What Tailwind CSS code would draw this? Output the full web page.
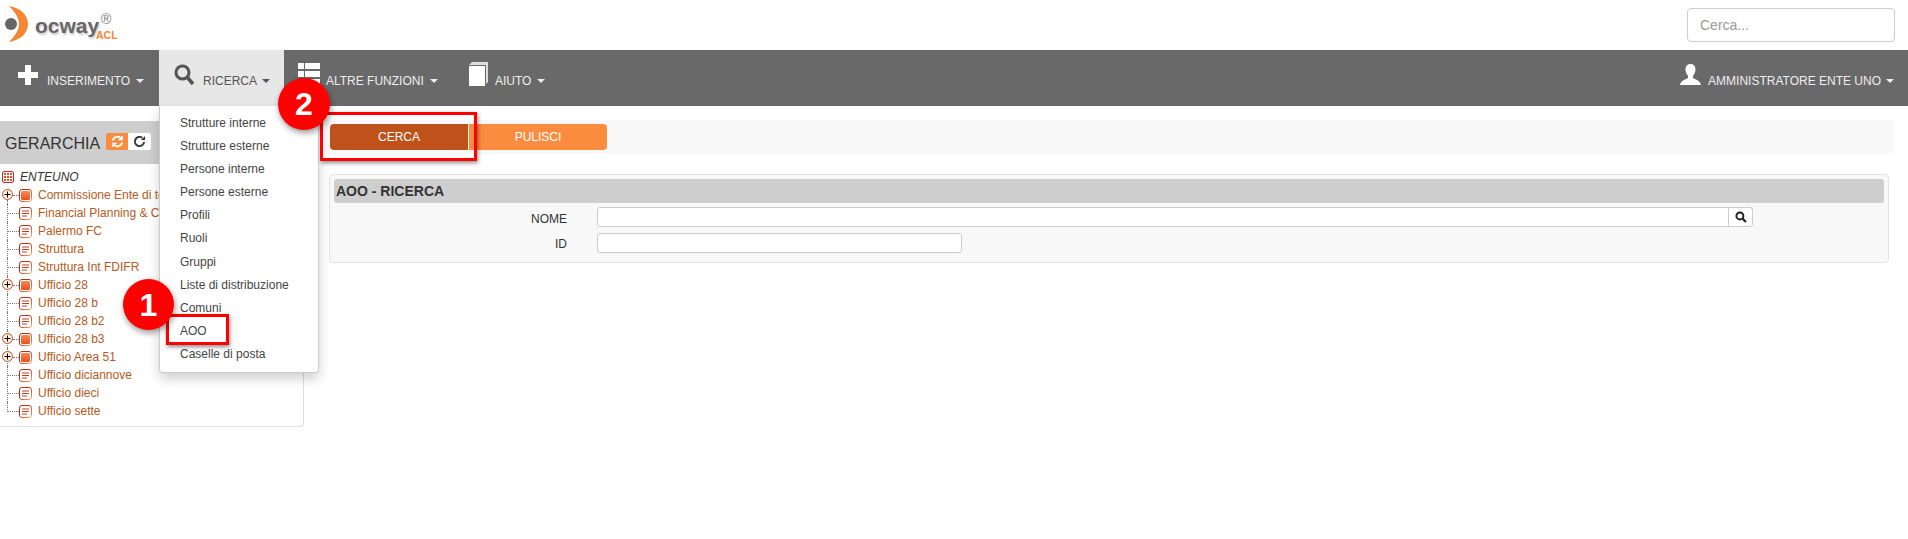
<!DOCTYPE html>
<html lang="it">
  <head>
    <meta charset="UTF-8" />
    <meta name="viewport" content="width=device-width, initial-scale=1.0" />
    <script src="https://cdn.jsdelivr.net/npm/@tailwindcss/browser@4"></script>
    <title>Docway ACL</title>
  </head>
  <body class="relative bg-white h-[539px] overflow-hidden font-['Liberation_Sans',Arial,sans-serif] text-[12px] text-[#333]">
    <svg class="absolute w-0 h-0">
      <defs>
        <linearGradient id="edge" x1="0" y1="0" x2="1" y2="1">
          <stop offset="0.4" stop-color="#b8301a" />
          <stop offset="1" stop-color="#f9b070" />
        </linearGradient>
        <linearGradient id="fillbox" x1="0" y1="0" x2="0" y2="1">
          <stop offset="0" stop-color="#f98a55" />
          <stop offset="1" stop-color="#e8501f" />
        </linearGradient>
      </defs>
      <symbol id="office" viewBox="0 0 13 13">
        <rect x="0.500" y="0.500" width="12" height="12" rx="2.500" fill="#fff" stroke="url(#edge)" />
        <rect x="2" y="2" width="9" height="9" rx="1.500" fill="url(#fillbox)" />
      </symbol>
      <symbol id="doc" viewBox="0 0 13 13">
        <rect x="0.500" y="0.500" width="12" height="12" rx="2.500" fill="#fff" stroke="url(#edge)" />
        <path d="M3 4h7M3 6.500h7M3 9h5" stroke="#c9401c" stroke-width="1" />
      </symbol>
      <symbol id="expand" viewBox="0 0 11 11">
        <circle cx="5.500" cy="5.500" r="5" fill="#fff0dc" stroke="#c9502a" />
        <path d="M2.500 5.500h6M5.500 2.500v6" stroke="#000" stroke-width="1" />
      </symbol>
      <symbol id="caret" viewBox="0 0 8 4">
        <path d="M0 0h8L4 4z" fill="currentColor" />
      </symbol>
    </svg>

    <!-- Logo and search -->
    <header class="h-[50px] flex items-center justify-between pr-[13px]">
      <div class="relative w-[130px] h-[50px]">
        <svg class="absolute left-[5px] top-[6px] w-[24px] h-[36px]" viewBox="0 0 24 36">
          <circle cx="6" cy="18" r="6" fill="#666" />
          <path d="M4 0C16 2 23 9 23 18S16 34 4 36C10 30 14 24 14 18S10 6 4 0z" fill="#f58634" />
        </svg>
        <span class="absolute left-[35px] top-[15px] font-bold text-[21px] leading-[21px] text-[#666] [text-shadow:1px_2px_2px_#ccc]">ocway</span>
        <span class="absolute left-[101px] top-[12px] text-[14px] leading-[14px] text-[#777]">®</span>
        <span class="absolute left-[96px] top-[29px] font-bold text-[10.500px] leading-[12px] text-[#f58634]">ACL</span>
      </div>
      <input type="text" placeholder="Cerca..." class="w-[208px] h-[34px] px-3 text-[14px] bg-white border border-[#ccc] rounded placeholder:text-[#999]" />
    </header>

    <!-- Main menu -->
    <nav class="h-[56px] bg-[#696969] flex items-stretch justify-between text-[#eee]">
      <div class="flex items-stretch">
        <a class="w-[159px] pl-[18px] flex items-center gap-[9px] pt-[6px]">
          <svg class="w-[20px] h-[20px] mb-[12px]" viewBox="0 0 20 20"><path d="M7 0h6v7h7v6h-7v7H7v-7H0V7h7z" fill="#fff" /></svg>
          <span>INSERIMENTO</span>
          <svg class="w-[8px] h-[4px] -ml-[3px]"><use href="#caret" /></svg>
        </a>
        <a class="w-[125px] pl-[15px] flex items-center gap-[8px] pt-[6px] bg-[#e7e7e7] text-[#555]">
          <svg class="w-[21px] h-[22px] mb-[13px]" viewBox="0 0 21 22" fill="none" stroke="#555"><circle cx="8.500" cy="8.500" r="6.500" stroke-width="3" /><path d="M13 13l6 7" stroke-width="3.500" /></svg>
          <span>RICERCA</span>
          <svg class="w-[8px] h-[4px] -ml-[3px]"><use href="#caret" /></svg>
        </a>
        <a class="w-[185px] pl-[14px] flex items-center gap-[6px] pt-[6px]">
          <svg class="w-[22px] h-[22px] mb-[14px]" viewBox="0 0 22 22" fill="#fff"><path d="M0 0h6v6H0zM7 0h15v6H7zM0 8h6v6H0zM7 8h15v6H7zM0 16h6v6H0zM7 16h15v6H7z" /></svg>
          <span>ALTRE FUNZIONI</span>
          <svg class="w-[8px] h-[4px]"><use href="#caret" /></svg>
        </a>
        <a class="flex items-center gap-[7px] pt-[6px]">
          <svg class="w-[19px] h-[24px] mb-[14px]" viewBox="0 0 19 24"><path d="M0 3L3 0h16v20l-2 2V3z" fill="#ddd" /><path d="M0 4h16v20H0z" fill="#fff" /></svg>
          <span>AIUTO</span>
          <svg class="w-[8px] h-[4px] -ml-[1px]"><use href="#caret" /></svg>
        </a>
      </div>
      <a class="pr-[14px] flex items-center gap-[7px] pt-[6px]">
        <svg class="w-[21px] h-[21px] mb-[14px]" viewBox="0 0 21 21" fill="#fff"><path d="M10.500 0c3.500 0 5 2.500 5 5.500 0 3-1.500 5-2.500 6.500v2c2 1.500 7 2 8 7H0c1-5 6-5.500 8-7v-2C7 10.500 5.500 8.500 5.500 5.500 5.500 2.500 7 0 10.500 0z" /></svg>
        <span>AMMINISTRATORE ENTE UNO</span>
        <svg class="w-[8px] h-[4px] -ml-[2px]"><use href="#caret" /></svg>
      </a>
    </nav>

    <div class="flex items-start">
      <!-- Hierarchy -->
      <aside class="w-[304px] mt-[15px] h-[306px] border-r border-b border-[#ddd] rounded-br">
        <div class="h-[43px] bg-[#cecece] flex items-center pl-[5px] text-[#333]">
          <h2 class="w-[101px] text-[16px] pt-[2px]">GERARCHIA</h2>
          <span class="w-[22px] h-[17px] mb-[2px] bg-[#fb8c3f] rounded-l-[2px] flex items-center justify-center">
            <svg class="w-[13px] h-[13px]" viewBox="0 0 14 14" fill="none" stroke="#fff" stroke-width="2"><path d="M2 6a5 5 0 0 1 9-2M12 8a5 5 0 0 1-9 2" /><path d="M12 1v4H8M2 13V9h4" stroke-width="1.500" /></svg>
          </span>
          <span class="w-[23px] h-[17px] mb-[2px] bg-white rounded-r-[2px] flex items-center justify-center">
            <svg class="w-[13px] h-[13px]" viewBox="0 0 14 14" fill="none" stroke="#333" stroke-width="2"><path d="M12 7.500a5 5 0 1 1-2-4.500" /><path d="M13 1v4.500H8.500z" fill="#333" stroke="none" /></svg>
          </span>
        </div>
        <ul class="pt-[4px] pl-[2px] text-[#b55a22]">
          <li class="h-[18px] flex items-center gap-[6px] text-[#333] italic">
            <svg class="w-[12px] h-[12px] shrink-0" viewBox="0 0 12 12"><rect x="0.500" y="0.500" width="11" height="11" rx="1.500" fill="#fff" stroke="#c9301c" /><path d="M2 2h2v2H2zM5 2h2v2H5zM8 2h2v2H8zM2 5h2v2H2zM5 5h2v2H5zM8 5h2v2H8zM2 8h2v2H2zM5 8h2v2H5zM8 8h2v2H8z" fill="#e8502f" /></svg>
            <span>ENTEUNO</span>
          </li>
          <li class="relative h-[18px] flex items-center pl-[17px] gap-[6px]">
            <svg class="absolute left-0 top-[3px] w-[11px] h-[11px]"><use href="#expand" /></svg>
            <span class="absolute left-[11px] top-[9px] w-[6px] border-t border-dotted border-[#777]"></span>
            <span class="absolute left-[5px] top-[14px] h-[4px] border-l border-dotted border-[#777]"></span>
            <svg class="w-[13px] h-[13px] shrink-0"><use href="#office" /></svg><span>Commissione Ente di test</span>
          </li>
          <li class="relative h-[18px] flex items-center pl-[17px] gap-[6px]">
            <span class="absolute left-[5px] top-0 h-[18px] border-l border-dotted border-[#777]"></span>
            <span class="absolute left-[5px] top-[9px] w-[12px] border-t border-dotted border-[#777]"></span>
            <svg class="w-[13px] h-[13px] shrink-0"><use href="#doc" /></svg><span>Financial Planning &amp; Control</span>
          </li>
          <li class="relative h-[18px] flex items-center pl-[17px] gap-[6px]">
            <span class="absolute left-[5px] top-0 h-[18px] border-l border-dotted border-[#777]"></span>
            <span class="absolute left-[5px] top-[9px] w-[12px] border-t border-dotted border-[#777]"></span>
            <svg class="w-[13px] h-[13px] shrink-0"><use href="#doc" /></svg><span>Palermo FC</span>
          </li>
          <li class="relative h-[18px] flex items-center pl-[17px] gap-[6px]">
            <span class="absolute left-[5px] top-0 h-[18px] border-l border-dotted border-[#777]"></span>
            <span class="absolute left-[5px] top-[9px] w-[12px] border-t border-dotted border-[#777]"></span>
            <svg class="w-[13px] h-[13px] shrink-0"><use href="#doc" /></svg><span>Struttura</span>
          </li>
          <li class="relative h-[18px] flex items-center pl-[17px] gap-[6px]">
            <span class="absolute left-[5px] top-0 h-[18px] border-l border-dotted border-[#777]"></span>
            <span class="absolute left-[5px] top-[9px] w-[12px] border-t border-dotted border-[#777]"></span>
            <svg class="w-[13px] h-[13px] shrink-0"><use href="#doc" /></svg><span>Struttura Int FDIFR</span>
          </li>
          <li class="relative h-[18px] flex items-center pl-[17px] gap-[6px]">
            <span class="absolute left-[5px] top-0 h-[18px] border-l border-dotted border-[#777]"></span>
            <svg class="absolute left-0 top-[3px] w-[11px] h-[11px]"><use href="#expand" /></svg>
            <span class="absolute left-[11px] top-[9px] w-[6px] border-t border-dotted border-[#777]"></span>
            <svg class="w-[13px] h-[13px] shrink-0"><use href="#office" /></svg><span>Ufficio 28</span>
          </li>
          <li class="relative h-[18px] flex items-center pl-[17px] gap-[6px]">
            <span class="absolute left-[5px] top-0 h-[18px] border-l border-dotted border-[#777]"></span>
            <span class="absolute left-[5px] top-[9px] w-[12px] border-t border-dotted border-[#777]"></span>
            <svg class="w-[13px] h-[13px] shrink-0"><use href="#doc" /></svg><span>Ufficio 28 b</span>
          </li>
          <li class="relative h-[18px] flex items-center pl-[17px] gap-[6px]">
            <span class="absolute left-[5px] top-0 h-[18px] border-l border-dotted border-[#777]"></span>
            <span class="absolute left-[5px] top-[9px] w-[12px] border-t border-dotted border-[#777]"></span>
            <svg class="w-[13px] h-[13px] shrink-0"><use href="#doc" /></svg><span>Ufficio 28 b2</span>
          </li>
          <li class="relative h-[18px] flex items-center pl-[17px] gap-[6px]">
            <span class="absolute left-[5px] top-0 h-[18px] border-l border-dotted border-[#777]"></span>
            <svg class="absolute left-0 top-[3px] w-[11px] h-[11px]"><use href="#expand" /></svg>
            <span class="absolute left-[11px] top-[9px] w-[6px] border-t border-dotted border-[#777]"></span>
            <svg class="w-[13px] h-[13px] shrink-0"><use href="#office" /></svg><span>Ufficio 28 b3</span>
          </li>
          <li class="relative h-[18px] flex items-center pl-[17px] gap-[6px]">
            <span class="absolute left-[5px] top-0 h-[18px] border-l border-dotted border-[#777]"></span>
            <svg class="absolute left-0 top-[3px] w-[11px] h-[11px]"><use href="#expand" /></svg>
            <span class="absolute left-[11px] top-[9px] w-[6px] border-t border-dotted border-[#777]"></span>
            <svg class="w-[13px] h-[13px] shrink-0"><use href="#office" /></svg><span>Ufficio Area 51</span>
          </li>
          <li class="relative h-[18px] flex items-center pl-[17px] gap-[6px]">
            <span class="absolute left-[5px] top-0 h-[18px] border-l border-dotted border-[#777]"></span>
            <span class="absolute left-[5px] top-[9px] w-[12px] border-t border-dotted border-[#777]"></span>
            <svg class="w-[13px] h-[13px] shrink-0"><use href="#doc" /></svg><span>Ufficio diciannove</span>
          </li>
          <li class="relative h-[18px] flex items-center pl-[17px] gap-[6px]">
            <span class="absolute left-[5px] top-0 h-[18px] border-l border-dotted border-[#777]"></span>
            <span class="absolute left-[5px] top-[9px] w-[12px] border-t border-dotted border-[#777]"></span>
            <svg class="w-[13px] h-[13px] shrink-0"><use href="#doc" /></svg><span>Ufficio dieci</span>
          </li>
          <li class="relative h-[18px] flex items-center pl-[17px] gap-[6px]">
            <span class="absolute left-[5px] top-0 h-[10px] border-l border-dotted border-[#777]"></span>
            <span class="absolute left-[5px] top-[9px] w-[12px] border-t border-dotted border-[#777]"></span>
            <svg class="w-[13px] h-[13px] shrink-0"><use href="#doc" /></svg><span>Ufficio sette</span>
          </li>
        </ul>
      </aside>

      <!-- Search form -->
      <main class="ml-[16px] mt-[14px] w-[1574px]">
        <div class="h-[34px] bg-[#f8f8f8] rounded pt-[4px] pl-[10px] flex items-start text-white">
          <button class="w-[138px] h-[26px] bg-[#bf521b] rounded-l">CERCA</button>
          <button class="ml-[1px] w-[138px] h-[26px] bg-[#fb8c3f] rounded-r">PULISCI</button>
        </div>
        <section class="mt-[20px] ml-[9px] w-[1560px] h-[89px] bg-[#f8f8f8] border border-[#e3e3e3] rounded p-[4px]">
          <h3 class="h-[24px] bg-[#cecece] rounded-[3px] px-[2px] font-bold text-[14px] leading-[24px]">AOO - RICERCA</h3>
          <div class="mt-[4px] flex items-center h-[20px]">
            <label class="w-[233px] text-right pt-[3px]">NOME</label>
            <input type="text" class="ml-[30px] w-[1132px] h-[20px] bg-white border border-[#ccc] rounded-l-[3px]" />
            <button class="w-[25px] h-[20px] -ml-[1px] bg-white border border-[#ccc] rounded-r-[3px] flex items-center justify-center">
              <svg class="w-[12px] h-[12px]" viewBox="0 0 11 11" fill="none" stroke="#222"><circle cx="4.500" cy="4.500" r="3.200" stroke-width="1.800" /><path d="M7 7l3 3" stroke-width="2" /></svg>
            </button>
          </div>
          <div class="mt-[6px] flex items-center h-[20px]">
            <label class="w-[233px] text-right pt-[2px]">ID</label>
            <input type="text" class="ml-[30px] w-[365px] h-[20px] bg-white border border-[#ccc] rounded-[3px]" />
          </div>
        </section>
      </main>
    </div>

    <!-- Open dropdown of RICERCA -->
    <ul class="absolute left-[159px] top-[106px] w-[160px] h-[267px] pt-[6px] bg-white border border-[#ccc] border-t-0 rounded-b shadow-[0_6px_12px_rgba(0,0,0,0.18)] text-[#444]">
      <li class="h-[23.100px] pl-[20px] leading-[23px]">Strutture interne</li>
      <li class="h-[23.100px] pl-[20px] leading-[23px]">Strutture esterne</li>
      <li class="h-[23.100px] pl-[20px] leading-[23px]">Persone interne</li>
      <li class="h-[23.100px] pl-[20px] leading-[23px]">Persone esterne</li>
      <li class="h-[23.100px] pl-[20px] leading-[23px]">Profili</li>
      <li class="h-[23.100px] pl-[20px] leading-[23px]">Ruoli</li>
      <li class="h-[23.100px] pl-[20px] leading-[23px]">Gruppi</li>
      <li class="h-[23.100px] pl-[20px] leading-[23px]">Liste di distribuzione</li>
      <li class="h-[23.100px] pl-[20px] leading-[23px]">Comuni</li>
      <li class="h-[23.100px] pl-[20px] leading-[23px]">AOO</li>
      <li class="h-[23.100px] pl-[20px] leading-[23px]">Caselle di posta</li>
    </ul>

    <!-- Tutorial annotations -->
    <div class="absolute left-[166px] top-[314px] w-[63px] h-[31px] border-[3px] border-[#f00] shadow-[1px_2px_4px_rgba(0,0,0,0.45)]"></div>
    <div class="absolute left-[320px] top-[112px] w-[157px] h-[49px] border-[3px] border-[#f00] shadow-[1px_2px_4px_rgba(0,0,0,0.45)]"></div>
    <div class="absolute left-[123px] top-[279px] w-[51px] h-[51px] rounded-full bg-[#f00] text-white font-bold text-[32px] flex items-center justify-center shadow-[1px_3px_6px_rgba(0,0,0,0.4)]">1</div>
    <div class="absolute left-[278px] top-[78px] w-[52px] h-[52px] rounded-full bg-[#f00] text-white font-bold text-[32px] flex items-center justify-center shadow-[1px_3px_6px_rgba(0,0,0,0.4)]">2</div>
  </body>
</html>
